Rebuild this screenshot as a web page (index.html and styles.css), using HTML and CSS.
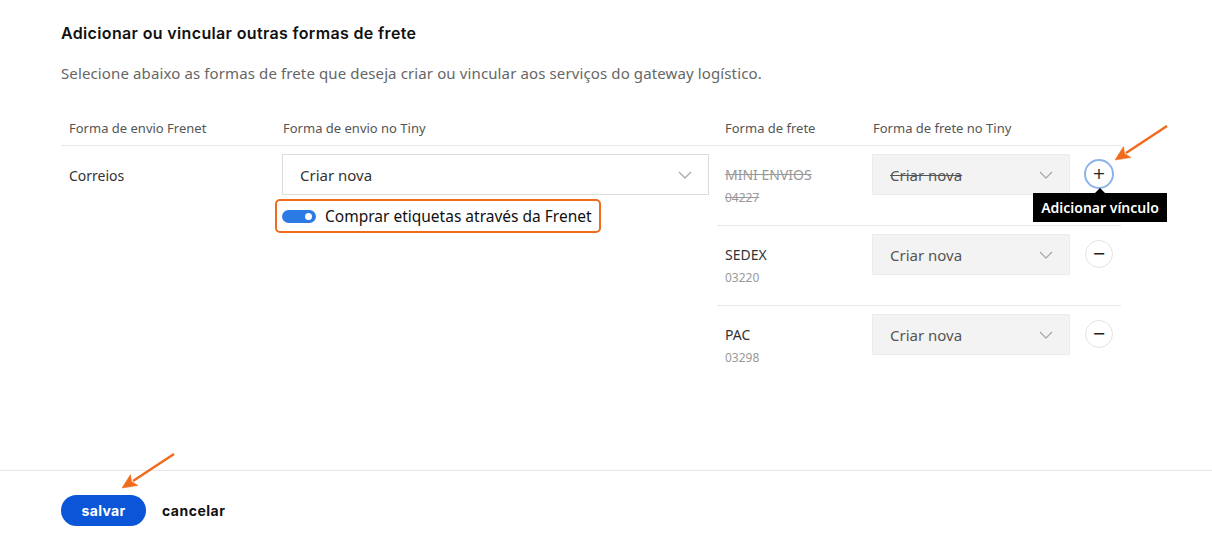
FILE: index.html
```html
<!DOCTYPE html>
<html lang="pt-BR">
  <head>
    <meta charset="utf-8" />
    <title>Formas de frete</title>
    <link rel="stylesheet" href="styles.css">
  </head>
  <body>
    <div class="content">
      <h2 class="title">Adicionar ou vincular outras formas de frete</h2>
      <p class="subtitle">Selecione abaixo as formas de frete que deseja criar ou vincular aos serviços do gateway logístico.</p>

      <div class="table">
        <div class="thead">
          <div class="col-frenet">Forma de envio Frenet</div>
          <div class="col-tiny">Forma de envio no Tiny</div>
          <div class="col-frete">Forma de frete</div>
          <div class="col-frete-tiny">Forma de frete no Tiny</div>
        </div>
        <div class="tbody">
          <div class="col-frenet cell-name">Correios</div>
          <div class="col-tiny">
            <div class="select">
              <span>Criar nova</span>
              <svg class="chevron" width="14" height="8" viewBox="0 0 14 8"><path d="M1 1l6 6 6-6" fill="none" stroke="#aaa" stroke-width="1.3"/></svg>
            </div>
            <label class="buy-labels">
              <span class="switch"><span class="knob"></span></span>
              Comprar etiquetas através da Frenet
            </label>
          </div>
          <div class="services">
            <div class="service removed">
              <div class="col-frete">
                <div class="svc-name">MINI ENVIOS</div>
                <div class="svc-code">04227</div>
              </div>
              <div class="col-frete-tiny">
                <div class="select grey">
                  <span>Criar nova</span>
                  <svg class="chevron" width="14" height="8" viewBox="0 0 14 8"><path d="M1 1l6 6 6-6" fill="none" stroke="#aaa" stroke-width="1.3"/></svg>
                </div>
              </div>
              <div class="col-action">
                <button class="round focus">+</button>
                <div class="tooltip">Adicionar vínculo</div>
              </div>
            </div>
            <div class="service">
              <div class="col-frete">
                <div class="svc-name">SEDEX</div>
                <div class="svc-code">03220</div>
              </div>
              <div class="col-frete-tiny">
                <div class="select grey">
                  <span>Criar nova</span>
                  <svg class="chevron" width="14" height="8" viewBox="0 0 14 8"><path d="M1 1l6 6 6-6" fill="none" stroke="#aaa" stroke-width="1.3"/></svg>
                </div>
              </div>
              <div class="col-action">
                <button class="round">&minus;</button>
              </div>
            </div>
            <div class="service">
              <div class="col-frete">
                <div class="svc-name">PAC</div>
                <div class="svc-code">03298</div>
              </div>
              <div class="col-frete-tiny">
                <div class="select grey">
                  <span>Criar nova</span>
                  <svg class="chevron" width="14" height="8" viewBox="0 0 14 8"><path d="M1 1l6 6 6-6" fill="none" stroke="#aaa" stroke-width="1.3"/></svg>
                </div>
              </div>
              <div class="col-action">
                <button class="round">&minus;</button>
              </div>
            </div>
          </div>
        </div>
      </div>
    </div>

    <div class="footer">
      <button class="btn-save">salvar</button>
      <button class="btn-cancel">cancelar</button>
    </div>

    <!-- setas de anotação -->
    <svg class="arrows" width="1212" height="546" viewBox="0 0 1212 546">
      <g fill="#f26a1c" stroke="#f26a1c">
        <line x1="1167" y1="126" x2="1126" y2="153" stroke-width="2.5"/>
        <path d="M1115 160 L1123.5 146.5 L1124.5 153.5 L1131 157.5 Z" stroke-width="0.5"/>
        <line x1="174" y1="454" x2="133" y2="481" stroke-width="2.5"/>
        <path d="M122 488 L130.5 474.5 L131.5 481.5 L138 485.5 Z" stroke-width="0.5"/>
      </g>
    </svg>
  </body>
</html>
```

FILE: styles.css
```css
body {
  margin: 0;
  font-family: "Noto Sans", "Open Sans", sans-serif;
  color: #333;
  background: #fff;
  position: relative;
  height: 546px;
  overflow: hidden;
}

.content {
  height: 470px;
  box-sizing: border-box;
  padding: 22px 61px 0;
}

.title {
  margin: 0;
  font-family: Inter, sans-serif;
  font-size: 16px;
  font-weight: 600;
  letter-spacing: 0.35px;
  line-height: 22px;
  color: #111;
}

.subtitle {
  margin: 18px 0 0;
  font-size: 15px;
  letter-spacing: 0.12px;
  line-height: 22px;
  color: #666;
}

.table {
  width: 1060px;
  margin-top: 26px;
  font-size: 13px;
}

.thead {
  display: flex;
  height: 35px;
  align-items: center;
  border-bottom: 1px solid #e9e9e9;
  color: #555;
}

.col-frenet {
  width: 214px;
  padding-left: 8px;
  box-sizing: border-box;
}
.col-tiny {
  width: 442px;
  padding-left: 8px;
  box-sizing: border-box;
}
.thead .col-frete,
.service .col-frete {
  width: 148px;
  padding-left: 8px;
  box-sizing: border-box;
}
.col-frete-tiny {
  width: 205px;
  padding-left: 8px;
  box-sizing: border-box;
}

.tbody {
  display: flex;
  align-items: flex-start;
}

.cell-name {
  padding-top: 20px;
  font-size: 14px;
  color: #333;
}

.tbody .col-tiny {
  padding: 8px 0 0 7px;
}

.select {
  display: flex;
  align-items: center;
  justify-content: space-between;
  width: 427px;
  height: 41px;
  box-sizing: border-box;
  padding: 0 16px 0 17px;
  border: 1px solid #dcdcdc;
  background: #fff;
  font-size: 15px;
  color: #333;
}
.select.grey {
  width: 198px;
  background: #f3f3f3;
  border-color: #ececec;
  color: #555;
}

.buy-labels {
  display: inline-flex;
  align-items: center;
  gap: 9px;
  margin: 4px 0 0 -7px;
  height: 34px;
  padding: 0 7px 0 5px;
  box-sizing: border-box;
  border: 2px solid #f26a1c;
  border-radius: 5px;
  font-size: 15.5px;
  color: #111;
}
.switch {
  display: flex;
  align-items: center;
  justify-content: flex-end;
  width: 34px;
  height: 13px;
  padding: 0 4px;
  box-sizing: border-box;
  border-radius: 7px;
  background: #2c7be5;
}
.knob {
  width: 7px;
  height: 7px;
  border-radius: 50%;
  background: #fff;
}

.services {
  width: 404px;
}
.service {
  display: flex;
  height: 80px;
  box-sizing: border-box;
  padding-top: 8px;
  border-bottom: 1px solid #e9e9e9;
}
.service:last-child {
  border-bottom: none;
}
.service .col-frete-tiny {
  width: 205px;
  padding-left: 7px;
}
.svc-name {
  margin-top: 12px;
  font-size: 14px;
  line-height: 18px;
  color: #333;
}
.svc-code {
  margin-top: 6px;
  font-size: 12px;
  line-height: 16px;
  color: #999;
}
.removed .svc-name,
.removed .svc-code {
  color: #999;
  text-decoration: line-through;
}
.removed .select span {
  text-decoration: line-through;
}

.col-action {
  position: relative;
  width: 51px;
  padding: 6px 0 0 15px;
  box-sizing: border-box;
}
.round {
  width: 28px;
  height: 28px;
  padding: 0;
  border-radius: 50%;
  border: 1px solid #e3e3e3;
  background: #fff;
  font-family: "DejaVu Sans", sans-serif;
  font-size: 16px;
  line-height: 24px;
  color: #222;
}
.round.focus {
  width: 30px;
  height: 30px;
  margin: -1px 0 0 -1px;
  border: 2px solid #8db3ec;
}

.tooltip {
  position: absolute;
  top: 39px;
  left: -37px;
  width: 134px;
  height: 29px;
  background: #000;
  color: #fff;
  font-size: 14px;
  font-weight: 600;
  line-height: 29px;
  text-align: center;
}
.tooltip::before {
  content: "";
  position: absolute;
  top: -5px;
  left: 62px;
  border: 5px solid transparent;
  border-top: none;
  border-bottom-color: #000;
}

.footer {
  display: flex;
  align-items: center;
  gap: 16px;
  border-top: 1px solid #e6e6e6;
  padding: 24px 61px 0;
}
.btn-save {
  width: 85px;
  height: 31px;
  border: none;
  border-radius: 16px;
  background: #0b55d9;
  color: #fff;
  font-family: Inter, sans-serif;
  font-size: 14px;
  font-weight: 700;
  letter-spacing: 0.3px;
}
.btn-cancel {
  border: none;
  background: none;
  padding: 0;
  font-family: Inter, sans-serif;
  font-size: 14px;
  font-weight: 700;
  letter-spacing: 0.5px;
  color: #111;
}

.arrows {
  position: absolute;
  top: 0;
  left: 0;
  pointer-events: none;
}
```
